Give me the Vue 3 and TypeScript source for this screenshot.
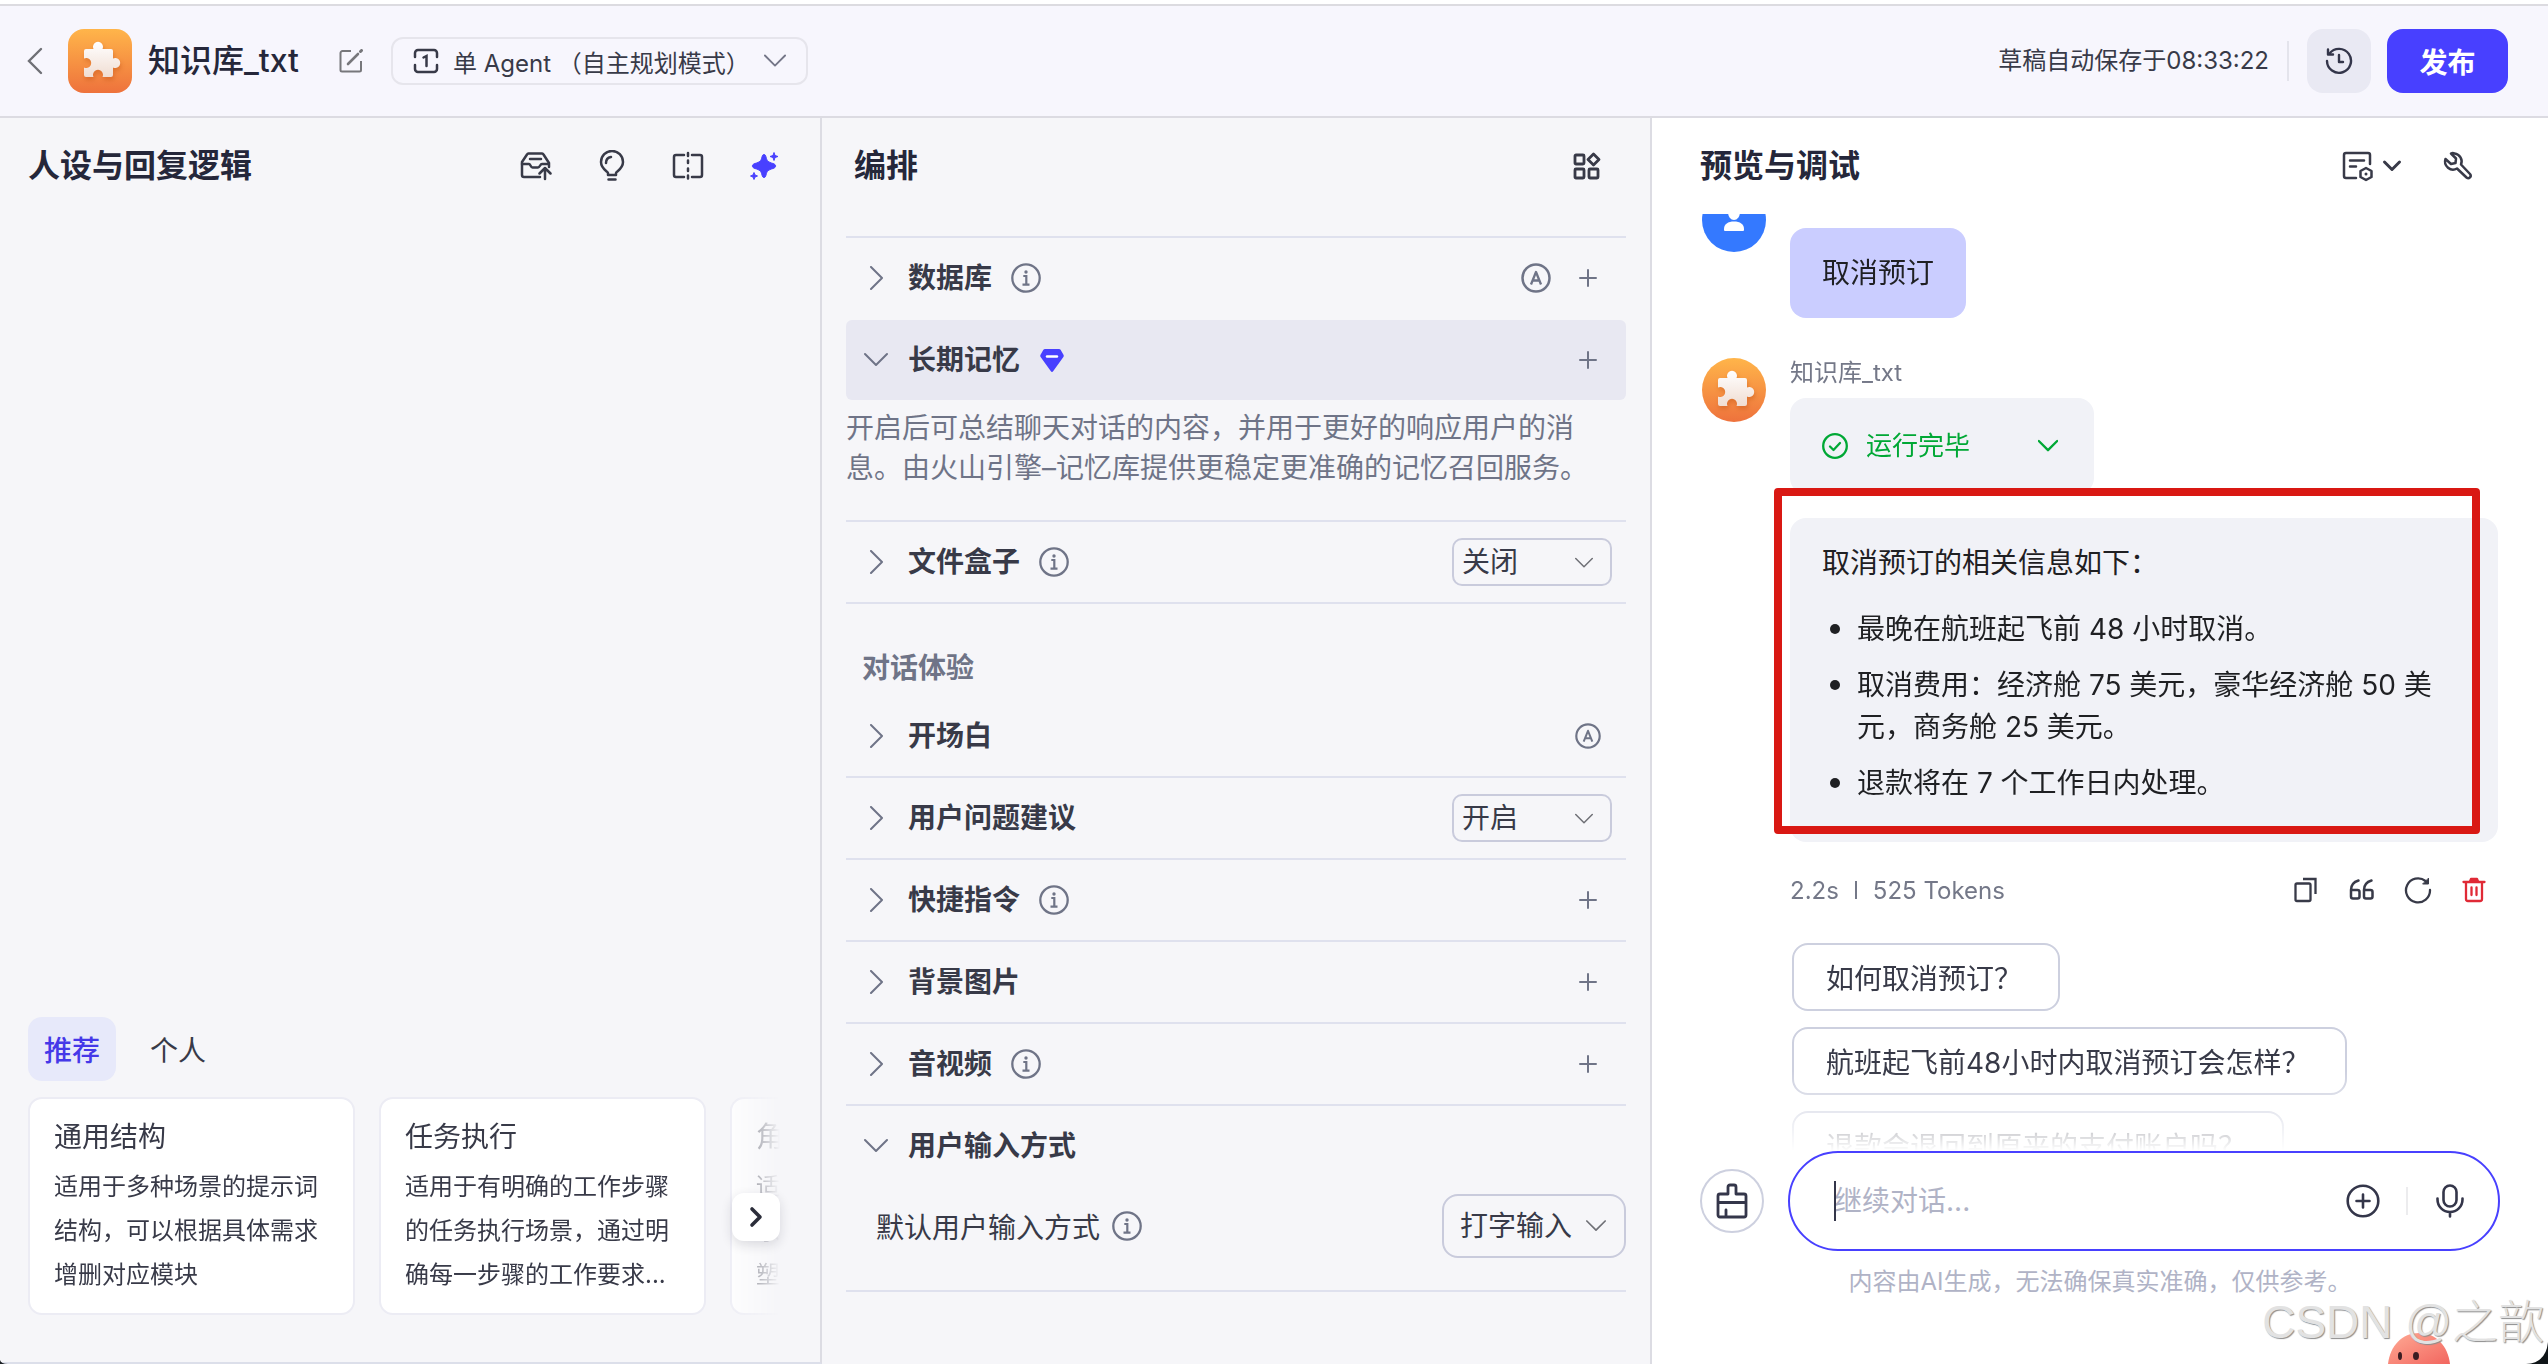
<script setup lang="ts">
import { ref } from 'vue'

interface PromptCard {
  title: string
  text: string
}

interface SettingRow {
  id: string
  title: string
  info?: boolean
  auto?: boolean
  add?: boolean
  value?: string
  options?: string[]
}

const tabs = ['推荐', '个人']
const activeTab = ref('推荐')

const cards: PromptCard[] = [
  { title: '通用结构', text: '适用于多种场景的提示词结构，可以根据具体需求增删对应模块' },
  { title: '任务执行', text: '适用于有明确的工作步骤的任务执行场景，通过明确每一步骤的工作要求...' },
  { title: '角', text: '适\n乐\n塑' },
]

const chatRows = ref<SettingRow[]>([
  { id: 'suggest', title: '用户问题建议', value: '开启', options: ['开启', '关闭'] },
  { id: 'shortcut', title: '快捷指令', info: true, add: true },
  { id: 'background', title: '背景图片', add: true },
  { id: 'media', title: '音视频', info: true, add: true },
])

const fileBox = ref('关闭')
const inputMode = ref('打字输入')
const draft = ref('')
const suggestions = ['如何取消预订？', '航班起飞前48小时内取消预订会怎样？', '退款会退回到原来的支付账户吗？']
</script>

<template>
  <div class="page">
    <svg class="sprite" aria-hidden="true">
      <symbol id="i-right" viewBox="0 0 24 24">
        <path d="M7 1l11 11L7 23" fill="none" stroke="currentColor" stroke-width="2" stroke-linecap="round" stroke-linejoin="round" />
      </symbol>
      <symbol id="i-down" viewBox="0 0 24 24">
        <path d="M1 6l11 11L23 6" fill="none" stroke="currentColor" stroke-width="2" stroke-linecap="round" stroke-linejoin="round" />
      </symbol>
      <symbol id="i-info" viewBox="0 0 30 30">
        <circle cx="15" cy="15" r="13.7" fill="none" stroke="currentColor" stroke-width="2.3" />
        <circle cx="15" cy="9" r="1.7" fill="currentColor" />
        <path d="M12.3 13h3v8.2M11.5 21.6h7" fill="none" stroke="currentColor" stroke-width="2.2" />
      </symbol>
      <symbol id="i-auto" viewBox="0 0 30 30">
        <circle cx="15" cy="15" r="13.5" fill="none" stroke="currentColor" stroke-width="2.5" />
        <path d="M10 21.5L15 9l5 12.5M11.8 17.5h6.4" fill="none" stroke="currentColor" stroke-width="2.3" stroke-linejoin="round" />
      </symbol>
      <symbol id="i-plus" viewBox="0 0 18 18">
        <path d="M9 1v16M1 9h16" fill="none" stroke="currentColor" stroke-width="2" stroke-linecap="round" />
      </symbol>
      <symbol id="i-puzzle" viewBox="0 0 64 64">
        <path d="M18 20H25.5A5 5 0 1 1 34.5 20H43a2 2 0 0 1 2 2V29.5A5 5 0 1 1 45 38.5V46a2 2 0 0 1-2 2H34.5A5 5 0 1 0 25.5 48H18a2 2 0 0 1-2-2V38.5A5 5 0 1 0 16 29.5V22a2 2 0 0 1 2-2Z" fill="url(#piece)" />
      </symbol>
      <defs>
        <linearGradient id="piece" x1="0" y1="0" x2="0" y2="1">
          <stop offset="0" stop-color="#ffffff" />
          <stop offset="1" stop-color="#f0ddd2" />
        </linearGradient>
      </defs>
    </svg>

    <header class="topbar">
      <button class="plain back" aria-label="返回">
        <svg width="16" height="28" viewBox="0 0 16 28"><path d="M14 2L2 14l12 12" fill="none" stroke="#6f7076" stroke-width="2.4" stroke-linecap="round" /></svg>
      </button>
      <span class="logo square"><svg width="64" height="64"><use href="#i-puzzle" /></svg></span>
      <h1>知识库_txt</h1>
      <button class="plain edit" aria-label="编辑">
        <svg width="24" height="24" viewBox="0 0 24 24" fill="none" stroke="#77777b" stroke-width="2">
          <path d="M12 2H3.5A2 2 0 0 0 1.5 4V21A1.5 1.5 0 0 0 3 22.5H20.5A1.5 1.5 0 0 0 22 21V12" />
          <path d="M9 15L19 5" stroke-width="2.6" stroke-linecap="round" />
          <path d="M21.5 2.5L22.5 1.5" stroke-width="3" stroke-linecap="round" />
        </svg>
      </button>
      <button class="mode">
        <svg width="26" height="26" viewBox="0 0 26 26" fill="none" stroke="#383a48" stroke-width="2.5" stroke-linecap="round">
          <path d="M2 9V5A3 3 0 0 1 5 2H21A3 3 0 0 1 24 5V9M2 17V21A3 3 0 0 0 5 24H21A3 3 0 0 0 24 21V17M10.5 9.5L13.5 8V18" />
        </svg>
        <span>单 Agent （自主规划模式）</span>
        <svg class="mode-arrow" width="24" height="24"><use href="#i-down" /></svg>
      </button>
      <span class="saved">草稿自动保存于08:33:22</span>
      <button class="history" aria-label="历史版本">
        <svg width="28" height="28" viewBox="0 0 28 28" fill="none" stroke="#34364a" stroke-width="2.4" stroke-linecap="round" stroke-linejoin="round">
          <path d="M4.5 6.5A12 12 0 1 1 2 14" />
          <path d="M3 2.5V7.5H8" />
          <path d="M14 8V15H18" />
        </svg>
      </button>
      <button class="publish">发布</button>
    </header>

    <main class="columns">
      <section class="panel persona">
        <div class="panel-head">
          <h2>人设与回复逻辑</h2>
          <div class="tools">
            <button class="plain" aria-label="导入">
              <svg width="32" height="32" viewBox="0 0 32 32" fill="none" stroke="#383a48" stroke-width="2.5" stroke-linecap="round" stroke-linejoin="round">
                <path d="M20 27H4A2 2 0 0 1 2 25V12L7 4.5A2 2 0 0 1 8.5 3.5H22A2 2 0 0 1 23.5 4.5L29 13V17" />
                <path d="M2 14H9C10.5 14 10.5 17.5 12.5 17.5H18C20 17.5 20 14 22 14H28.5M10 9H21" />
                <path d="M25 29V19M19.5 23.5L25 18L30.5 23.5" />
              </svg>
            </button>
            <button class="plain" aria-label="灵感">
              <svg width="32" height="32" viewBox="0 0 32 32" fill="none" stroke="#383a48" stroke-width="2.5" stroke-linecap="round" stroke-linejoin="round">
                <path d="M12 25V23C12 21.5 5 19 5 12A11 11 0 0 1 27 12C27 19 20 21.5 20 23V25Z" />
                <path d="M10 13C10 10 12 7.5 15 7M12.5 29.5H19.5" />
              </svg>
            </button>
            <button class="plain" aria-label="对比">
              <svg width="32" height="32" viewBox="0 0 32 32" fill="none" stroke="#383a48" stroke-width="2.5" stroke-linecap="round" stroke-linejoin="round">
                <path d="M12 5H4A2 2 0 0 0 2 7V25A2 2 0 0 0 4 27H12M20 5H28A2 2 0 0 1 30 7V25A2 2 0 0 1 28 27H20M16 3V6M16 10.5V13M16 18.5V21M16 25.5V28.5" />
              </svg>
            </button>
            <button class="plain" aria-label="智能优化">
              <svg width="32" height="32" viewBox="0 0 32 32" fill="#4840ff" stroke="#4840ff" stroke-width="1" stroke-linejoin="round">
                <path d="M16 4.5C17 4.5 17.5 5 18 7C19 11 20 12 25 13.5C28.5 14.5 28.5 17.5 25 18.5C20 20 19 21 18 25C17.5 27 17 27.5 16 27.5C15 27.5 14.5 27 14 25C13 21 12 20 7 18.5C3.5 17.5 3.5 14.5 7 13.5C12 12 13 11 14 7C14.5 5 15 4.5 16 4.5Z" />
                <path d="M26 2.5L27 5.5L30 6.5L27 7.5L26 10.5L25 7.5L22 6.5L25 5.5ZM6 22.5L7 25L9.5 26L7 27L6 29.5L5 27L2.5 26L5 25Z" />
              </svg>
            </button>
          </div>
        </div>
        <div class="library">
          <div class="tabs">
            <button v-for="t in tabs" :key="t" :class="['tab', { on: t === activeTab }]" @click="activeTab = t">{{ t }}</button>
          </div>
          <div class="cards-wrap">
            <div class="cards">
              <article v-for="c in cards" :key="c.title" class="card">
                <h3>{{ c.title }}</h3>
                <p>{{ c.text }}</p>
              </article>
            </div>
            <button class="next" aria-label="下一页">
              <svg width="16" height="22" viewBox="0 0 16 22"><path d="M4 3L12 11L4 19" fill="none" stroke="#2b2d3a" stroke-width="3.6" stroke-linecap="round" stroke-linejoin="round" /></svg>
            </button>
          </div>
        </div>
      </section>

      <section class="panel arrange">
        <div class="panel-head">
          <h2>编排</h2>
          <button class="plain" aria-label="布局">
            <svg width="28" height="28" viewBox="0 0 28 28" fill="none" stroke="#383a48" stroke-width="2.8" stroke-linejoin="round">
              <rect x="2" y="3" width="9" height="9" rx="1" /><rect x="2" y="17" width="9" height="9" rx="1" /><rect x="16" y="17" width="9" height="9" rx="1" />
              <path d="M20.5 2L26 7.5L20.5 13L15 7.5Z" />
            </svg>
          </button>
        </div>

        <div class="settings">
          <div class="row line">
            <button class="plain toggle"><svg width="24" height="24"><use href="#i-right" /></svg><span>数据库</span></button>
            <svg class="info" width="30" height="30"><use href="#i-info" /></svg>
            <div class="actions">
              <button class="plain" aria-label="自动"><svg width="30" height="30"><use href="#i-auto" /></svg></button>
              <button class="plain add" aria-label="添加"><svg width="18" height="18"><use href="#i-plus" /></svg></button>
            </div>
          </div>
          <div class="row gap active">
            <button class="plain toggle"><svg width="24" height="24"><use href="#i-down" /></svg><span>长期记忆</span></button>
            <svg class="info" width="26" height="26" viewBox="0 0 26 26"><path d="M6 2H20A2 2 0 0 1 21.6 2.8L24.6 8A2 2 0 0 1 24.4 10L14.3 24A1.6 1.6 0 0 1 11.7 24L1.6 10A2 2 0 0 1 1.4 8L4.4 2.8A2 2 0 0 1 6 2Z" fill="#4840ff" /><path d="M8 9.5H18" stroke="#fff" stroke-width="2.4" stroke-linecap="round" /></svg>
            <div class="actions">
              <button class="plain add" aria-label="添加"><svg width="18" height="18"><use href="#i-plus" /></svg></button>
            </div>
          </div>
          <p class="note">开启后可总结聊天对话的内容，并用于更好的响应用户的消息。由火山引擎–记忆库提供更稳定更准确的记忆召回服务。</p>
          <div class="row line">
            <button class="plain toggle"><svg width="24" height="24"><use href="#i-right" /></svg><span>文件盒子</span></button>
            <svg class="info" width="30" height="30"><use href="#i-info" /></svg>
            <div class="actions">
              <label class="pick">
                <select v-model="fileBox" aria-label="文件盒子"><option>关闭</option><option>开启</option></select>
                <svg width="18" height="18"><use href="#i-down" /></svg>
              </label>
            </div>
          </div>
          <h3 class="group line">对话体验</h3>
          <div class="row">
            <button class="plain toggle"><svg width="24" height="24"><use href="#i-right" /></svg><span>开场白</span></button>
            <div class="actions">
              <button class="plain solo" aria-label="自动"><svg width="26" height="26"><use href="#i-auto" /></svg></button>
            </div>
          </div>
          <div v-for="r in chatRows" :key="r.id" class="row line">
            <button class="plain toggle"><svg width="24" height="24"><use href="#i-right" /></svg><span>{{ r.title }}</span></button>
            <svg v-if="r.info" class="info" width="30" height="30"><use href="#i-info" /></svg>
            <div class="actions">
              <label v-if="r.options" class="pick">
                <select v-model="r.value" :aria-label="r.title"><option v-for="o in r.options" :key="o">{{ o }}</option></select>
                <svg width="18" height="18"><use href="#i-down" /></svg>
              </label>
              <button v-if="r.add" class="plain add" aria-label="添加"><svg width="18" height="18"><use href="#i-plus" /></svg></button>
            </div>
          </div>
          <div class="row line">
            <button class="plain toggle"><svg width="24" height="24"><use href="#i-down" /></svg><span>用户输入方式</span></button>
          </div>
          <div class="subrow">
            <label for="input-mode">默认用户输入方式</label>
            <svg class="info" width="30" height="30"><use href="#i-info" /></svg>
            <span class="pick large">
              <select id="input-mode" v-model="inputMode"><option>打字输入</option><option>语音输入</option></select>
              <svg width="20" height="20"><use href="#i-down" /></svg>
            </span>
          </div>
        </div>
      </section>

      <section class="panel preview">
        <div class="panel-head">
          <h2>预览与调试</h2>
          <div class="tools">
            <button class="plain memory" aria-label="记忆">
              <svg width="32" height="32" viewBox="0 0 32 32" fill="none" stroke="#383a48" stroke-width="2.5" stroke-linecap="round" stroke-linejoin="round">
                <path d="M14 28H4A2 2 0 0 1 2 26V5A2 2 0 0 1 4 3H26A2 2 0 0 1 28 5V14M8 10.5H22M8 16.5H14" />
                <path d="M24 18L29.5 21V27L24 30L18.5 27V21Z" /><circle cx="24" cy="24" r="1.5" fill="#383a48" stroke="none" />
              </svg>
              <svg width="20" height="20" viewBox="0 0 20 20"><path d="M2.5 6L10 13.5L17.5 6" fill="none" stroke="#383a48" stroke-width="3" stroke-linecap="round" stroke-linejoin="round" /></svg>
            </button>
            <button class="plain" aria-label="调试">
              <svg width="32" height="32" viewBox="0 0 32 32" fill="none" stroke="#383a48" stroke-width="2.5" stroke-linecap="round" stroke-linejoin="round">
                <path d="M12.5 3.500A8 8 0 0 1 19 14.5L28 24C30 26.5 27 29.5 24.5 27.5L15 18.5A8 8 0 0 1 3.5 9L9 14L13.5 13L14 8.5L9 3.500C10 3 11.5 3 12.5 3.500Z" />
              </svg>
            </button>
          </div>
        </div>

        <div class="chat">
          <div class="msg user">
            <span class="avatar">
              <svg width="64" height="64" viewBox="0 0 64 64" fill="#fff"><ellipse cx="32" cy="24" rx="6" ry="8" /><path d="M22 42V41C22 36 26 33.5 32 33.5S42 36 42 41V42A1 1 0 0 1 41 43H23A1 1 0 0 1 22 42Z" /></svg>
            </span>
            <div class="body"><p class="bubble mine">取消预订</p></div>
          </div>
          <div class="msg">
            <span class="logo"><svg width="64" height="64"><use href="#i-puzzle" /></svg></span>
            <div class="body">
              <span class="name">知识库_txt</span>
              <button class="bubble status">
                <svg width="26" height="26" viewBox="0 0 26 26" fill="none" stroke="currentColor" stroke-width="2.3" stroke-linecap="round" stroke-linejoin="round"><circle cx="13" cy="13" r="11.8" /><path d="M8 13.5L11.5 17L18 10" /></svg>
                <span>运行完毕</span>
                <svg class="status-arrow" width="20" height="20" viewBox="0 0 24 24"><path d="M1 6l11 11L23 6" fill="none" stroke="currentColor" stroke-width="2.8" stroke-linecap="round" stroke-linejoin="round" /></svg>
              </button>
              <div class="bubble answer">
                <p>取消预订的相关信息如下：</p>
                <ul>
                  <li>最晚在航班起飞前 48 小时取消。</li>
                  <li>取消费用：经济舱 75 美元，豪华经济舱 50 美元，商务舱 25 美元。</li>
                  <li>退款将在 7 个工作日内处理。</li>
                </ul>
                <span class="marker" aria-hidden="true"></span>
              </div>
              <div class="meta">
                <span>2.2s</span><i></i><span>525 Tokens</span>
                <div class="ops">
                  <button class="plain" aria-label="复制"><svg width="28" height="28" viewBox="0 0 28 28" fill="none" stroke="#383a48" stroke-width="2.3"><rect x="3.5" y="7.5" width="15" height="17.5" rx="1.5" /><path d="M11 3H23.5V18" /></svg></button>
                  <button class="plain" aria-label="引用"><svg width="28" height="28" viewBox="0 0 28 28" fill="none" stroke="#383a48" stroke-width="2.5" stroke-linecap="round" stroke-linejoin="round"><path d="M10.5 4.500C5.5 6 3 9 3 14V20.5A2 2 0 0 0 5 22.5H9.5A2 2 0 0 0 11.5 20.5V16A2 2 0 0 0 9.5 14H3M23.5 4.500C18.5 6 16 9 16 14V20.5A2 2 0 0 0 18 22.5H22.5A2 2 0 0 0 24.5 20.5V16A2 2 0 0 0 22.5 14H16" /></svg></button>
                  <button class="plain" aria-label="重新生成"><svg width="28" height="28" viewBox="0 0 28 28" fill="none" stroke="#383a48" stroke-width="2.3" stroke-linecap="round" stroke-linejoin="round"><path d="M26 14A12 12 0 1 1 21.5 5" /><path d="M24.5 2.5V8H19Z" fill="#383a48" stroke-width="1" /></svg></button>
                  <button class="plain" aria-label="删除"><svg width="28" height="28" viewBox="0 0 28 28" fill="none" stroke="#e02a36" stroke-width="2.3" stroke-linecap="round" stroke-linejoin="round"><path d="M3.5 6H24.5M6 6V23A2 2 0 0 0 8 25H20A2 2 0 0 0 22 23V6M11.5 11.5V19M16.5 11.5V19" /><path d="M10 5.5L11 3H17L18 5.5Z" fill="#e02a36" /></svg></button>
                </div>
              </div>
              <div class="chips">
                <button v-for="s in suggestions" :key="s" class="chip">{{ s }}</button>
              </div>
            </div>
          </div>
        </div>

        <div class="composer">
          <button class="clear" aria-label="清空">
            <svg width="34" height="36" viewBox="0 0 34 36" fill="none" stroke="#34364a" stroke-width="2.8" stroke-linecap="round" stroke-linejoin="round"><path d="M13 11V4A2 2 0 0 1 15 2H19A2 2 0 0 1 21 4V11H29A2 2 0 0 1 31 13V32A2 2 0 0 1 29 34H5A2 2 0 0 1 3 32V13A2 2 0 0 1 5 11ZM3 19.5H31M11 34V27" /></svg>
          </button>
          <div class="field">
            <input v-model="draft" type="text" placeholder="继续对话..." aria-label="继续对话" />
            <button class="plain" aria-label="添加附件"><svg width="34" height="34" viewBox="0 0 34 34" fill="none" stroke="#34364a" stroke-width="2.6" stroke-linecap="round"><circle cx="17" cy="17" r="15.3" /><path d="M17 10.5V23.5M10.5 17H23.5" /></svg></button>
            <i class="sep"></i>
            <button class="plain" aria-label="语音"><svg width="28" height="34" viewBox="0 0 28 34" fill="none" stroke="#34364a" stroke-width="2.6" stroke-linecap="round"><rect x="7.5" y="1.5" width="13" height="21" rx="6.5" /><path d="M1.5 14.5V15.500A12.5 12.5 0 0 0 26.5 15.5V14.5M14 28V32.5" /></svg></button>
          </div>
        </div>
        <p class="disclaimer">内容由AI生成，无法确保真实准确，仅供参考。</p>
      </section>
    </main>

    <svg class="mascot" width="62" height="32" viewBox="0 0 62 32" aria-hidden="true">
      <defs><linearGradient id="skin" x1="0" y1="0" x2="1" y2="1"><stop offset="0" stop-color="#ffab95" /><stop offset="1" stop-color="#f2665f" /></linearGradient></defs>
      <path d="M0 32C2 14 14 1 31 1C48 1 60 14 62 32Z" fill="url(#skin)" />
      <ellipse cx="12" cy="24" rx="2" ry="4" fill="#3a1d22" /><ellipse cx="28" cy="24" rx="3" ry="4" fill="#3a1d22" />
    </svg>
    <span class="watermark">CSDN @之歆</span>
    <svg class="corner left" width="8" height="4" viewBox="0 0 8 4" aria-hidden="true"><path d="M0 0Q1 4 8 4H0Z" fill="#1b2024" /></svg>
    <svg class="corner right" width="22" height="22" viewBox="0 0 22 22" aria-hidden="true"><path d="M22 0V22H0Q20 21 22 0Z" fill="#0f1518" /></svg>
  </div>
</template>

<style>
body {
  margin: 0;
  background: #fff;
}
</style>

<style scoped>
* {
  box-sizing: border-box;
}
.page {
  position: relative;
  display: flex;
  flex-direction: column;
  height: 100vh;
  padding-top: 4px;
  overflow: hidden;
  color: #383a48;
  font-family: Inter, 'Noto Sans CJK SC', sans-serif;
  font-size: 28px;
}
.sprite {
  position: absolute;
  width: 0;
  height: 0;
}
svg {
  display: block;
  flex: none;
}
h1, h2, h3, p, ul {
  margin: 0;
  padding: 0;
}
button, select, input {
  margin: 0;
  padding: 0;
  border: 0;
  background: none;
  color: inherit;
  font: inherit;
}
.plain {
  display: flex;
  align-items: center;
}

.topbar {
  display: flex;
  flex: none;
  align-items: center;
  height: 114px;
  padding: 0 40px 0 27px;
  border-top: 2px solid #dcdbe0;
  border-bottom: 2px solid #dcdbe2;
  background: #f7f6fd;
}
.logo {
  flex: none;
  width: 64px;
  height: 64px;
  border-radius: 50%;
  background: linear-gradient(#ffb54a, #ee723c);
}
.logo svg {
  filter: drop-shadow(1px 3px 2px rgba(190, 80, 20, 0.4));
}
.logo.square {
  margin-left: 25px;
  border-radius: 16px;
}
h1 {
  margin-left: 16px;
  color: #25273a;
  font-size: 32px;
  font-weight: 500;
  line-height: 48px;
}
.edit {
  margin-left: 40px;
}
.mode {
  display: flex;
  align-items: center;
  gap: 14px;
  height: 48px;
  margin-left: 28px;
  padding: 0 20px;
  border: 2px solid #e6e5ec;
  border-radius: 12px;
  font-size: 24px;
}
.mode-arrow {
  width: 22px;
  color: #747688;
}
.saved {
  margin-left: auto;
  padding-right: 18px;
  border-right: 2px solid #e4e4ec;
  font-size: 24px;
  line-height: 40px;
}
.history {
  display: flex;
  align-items: center;
  justify-content: center;
  width: 64px;
  height: 64px;
  margin: 0 16px 0 18px;
  border-radius: 16px;
  background: #e9e9f3;
}
.publish {
  width: 121px;
  height: 64px;
  border-radius: 16px;
  background: #4840ff;
  color: #fff;
  font-weight: 600;
}

.columns {
  display: grid;
  flex: 1;
  grid-template-columns: 822fr 830fr 896fr;
  min-height: 0;
}
.panel {
  display: flex;
  flex-direction: column;
  min-width: 0;
  min-height: 0;
  border-right: 2px solid #dcdce3;
  background: #f6f6f9;
}
.panel-head {
  display: flex;
  flex: none;
  align-items: center;
  justify-content: space-between;
  height: 96px;
}
h2 {
  color: #25273a;
  font-size: 32px;
  font-weight: 600;
  line-height: 48px;
}
.tools {
  display: flex;
  gap: 44px;
}

.persona {
  justify-content: space-between;
  padding-left: 28px;
  border-bottom: 2px solid #dcdfea;
}
.persona .panel-head {
  padding-right: 40px;
}
.library {
  padding-right: 40px;
  padding-bottom: 25px;
}
.tabs {
  display: flex;
  gap: 18px;
  margin-bottom: 16px;
}
.tab {
  height: 64px;
  padding: 0 16px;
  border-radius: 14px;
}
.tab.on {
  background: #e7e9fa;
  color: #4538e8;
  font-weight: 500;
}
.cards-wrap {
  position: relative;
}
.cards {
  display: flex;
  gap: 24px;
  padding-bottom: 22px;
  overflow: hidden;
  -webkit-mask-image: linear-gradient(to left, transparent, #000 64px);
  mask-image: linear-gradient(to left, transparent, #000 64px);
}
.card {
  flex: none;
  width: 327px;
  height: 218px;
  padding: 16px 24px;
  border: 2px solid #ececf4;
  border-radius: 14px;
  background: #fff;
  font-size: 24px;
  line-height: 44px;
}
.card h3 {
  margin-bottom: 6px;
  font-size: 28px;
  font-weight: 400;
  line-height: 44px;
}
.card p {
  width: 270px;
  line-height: 44px;
  white-space: pre-line;
}
.next {
  position: absolute;
  top: 96px;
  right: 0;
  display: flex;
  align-items: center;
  justify-content: center;
  width: 48px;
  height: 48px;
  border-radius: 12px;
  background: #fff;
  box-shadow: 0 4px 12px rgba(30, 30, 50, 0.14);
}

.arrange {
  padding: 0 24px;
}
.arrange .panel-head {
  padding: 0 25px 0 8px;
}
.settings {
  margin-top: 22px;
  border-bottom: 2px solid #dfe1ee;
}
.line {
  border-top: 2px solid #dfe1ee;
}
.row {
  display: flex;
  align-items: center;
  height: 82px;
  padding: 0 14px 0 18px;
  color: #6f7487;
}
.row:not(.line) {
  height: 80px;
}
.gap {
  margin-top: 2px;
}
.active {
  border-radius: 6px;
  background: #e8e8f2;
}
.toggle {
  gap: 20px;
}
.toggle span {
  color: #383a48;
  font-weight: 600;
  line-height: 40px;
}
.info {
  margin-left: 19px;
  color: #6f7487;
}
.actions {
  display: flex;
  align-items: center;
  gap: 28px;
  margin-left: auto;
}
.add {
  margin-right: 15px;
}
.solo {
  margin-right: 11px;
}
.note {
  padding: 8px 16px 32px 0;
  color: #6f7487;
  line-height: 40px;
}
.group {
  padding: 44px 16px 8px;
  color: #6f7487;
  font-size: 28px;
  font-weight: 600;
  line-height: 40px;
}
.pick {
  position: relative;
  display: block;
}
.pick select {
  display: block;
  width: 160px;
  height: 48px;
  padding: 0 8px;
  border: 2px solid #c9cbdc;
  border-radius: 10px;
  appearance: none;
  color: #383a48;
}
.pick svg {
  position: absolute;
  top: 16px;
  right: 19px;
  color: #6f7076;
  pointer-events: none;
}
.pick.large {
  margin-left: auto;
}
.pick.large select {
  width: 184px;
  height: 64px;
  padding: 0 16px;
  border-radius: 16px;
}
.pick.large svg {
  top: 22px;
  right: 20px;
}
.subrow {
  display: flex;
  align-items: center;
  padding: 8px 0 32px 30px;
}
.subrow .info {
  margin-left: 12px;
}

.preview {
  border-right: 0;
  background: #fff;
}
.preview .panel-head {
  padding: 0 74px 0 48px;
}
.preview .tools {
  gap: 40px;
}
.memory {
  gap: 8px;
}
.chat {
  flex: 1;
  min-height: 0;
  padding: 0 50px;
  overflow: hidden;
  -webkit-mask-image: linear-gradient(to top, transparent, #000 80px);
  mask-image: linear-gradient(to top, transparent, #000 80px);
}
.msg {
  display: flex;
  gap: 24px;
  margin-bottom: 40px;
}
.user {
  margin-top: -26px;
}
.user .body {
  padding-top: 40px;
}
.avatar {
  flex: none;
  width: 64px;
  height: 64px;
  border-radius: 50%;
  background: #3479ff;
}
.body {
  display: flex;
  flex: 1;
  flex-direction: column;
  align-items: flex-start;
  min-width: 0;
}
.name {
  margin-bottom: 10px;
  color: #747888;
  font-size: 24px;
  line-height: 30px;
}
.bubble {
  padding: 24px 32px;
  border-radius: 16px;
  background: #f1f2f7;
  color: #1f2023;
  line-height: 42px;
}
.mine {
  background: #cacdff;
}
.status {
  display: flex;
  align-items: center;
  width: 304px;
  height: 96px;
  color: #00a835;
  font-size: 26px;
}
.status span {
  margin-left: 18px;
}
.status-arrow {
  margin-left: auto;
  margin-right: 4px;
}
.answer {
  position: relative;
  align-self: stretch;
  margin-top: 24px;
}
.answer p {
  margin-bottom: 24px;
}
.answer ul {
  list-style: none;
}
.answer li {
  position: relative;
  margin-bottom: 14px;
  padding-right: 8px;
  padding-left: 35px;
}
.answer li::before {
  position: absolute;
  top: 16px;
  left: 8px;
  width: 10px;
  height: 10px;
  border-radius: 50%;
  background: currentColor;
  content: '';
}
.marker {
  position: absolute;
  top: -30px;
  right: 18px;
  bottom: 8px;
  left: -16px;
  border: 8px solid #d91813;
  border-radius: 4px;
}
.meta {
  display: flex;
  align-items: center;
  align-self: stretch;
  height: 36px;
  margin-top: 30px;
  padding-right: 10px;
  color: #747888;
  font-size: 24px;
}
.meta i {
  width: 2px;
  height: 18px;
  margin: 0 16px;
  background: #747888;
}
.ops {
  display: flex;
  gap: 28px;
  margin-left: auto;
}
.chips {
  display: flex;
  flex-direction: column;
  align-items: flex-start;
  gap: 16px;
  margin-top: 35px;
  margin-left: 2px;
}
.chip {
  height: 68px;
  padding: 0 36px 0 32px;
  border: 2px solid #cdd0df;
  border-radius: 16px;
}
.composer {
  display: flex;
  flex: none;
  align-items: center;
  gap: 24px;
  padding: 0 48px;
}
.clear {
  display: flex;
  align-items: center;
  justify-content: center;
  width: 64px;
  height: 64px;
  border: 2px solid #cdd0df;
  border-radius: 50%;
}
.field {
  position: relative;
  display: flex;
  flex: 1;
  align-items: center;
  height: 100px;
  padding: 0 34px 0 44px;
  border: 2px solid #4840ff;
  border-radius: 50px;
  background: #fff;
}
.field::before {
  position: absolute;
  top: 28px;
  left: 44px;
  width: 2px;
  height: 40px;
  background: #34364a;
  content: '';
}
.field input {
  flex: 1;
  min-width: 0;
  outline: none;
}
.field input::placeholder {
  color: #b0b3c6;
  opacity: 1;
}
.sep {
  width: 2px;
  height: 28px;
  margin: 0 28px 0 26px;
  background: #ececee;
}
.disclaimer {
  flex: none;
  padding: 15px 0 66px;
  color: #b0b3c6;
  font-size: 24px;
  line-height: 32px;
  text-align: center;
}

.mascot {
  position: absolute;
  right: 98px;
  bottom: 0;
}
.watermark {
  position: absolute;
  right: 4px;
  bottom: 10px;
  color: #e2e2e2;
  font-family: 'Liberation Sans', 'Noto Sans CJK SC', sans-serif;
  font-size: 46px;
  font-weight: 300;
  line-height: 64px;
  text-shadow: 1px 1px 1px #8c8c8c;
}
.corner {
  position: absolute;
  bottom: 0;
}
.corner.left {
  left: 0;
}
.corner.right {
  right: 0;
}
</style>
